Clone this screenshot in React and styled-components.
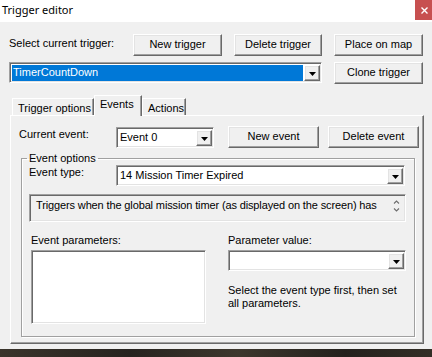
import React from 'react'
import styled, { createGlobalStyle } from 'styled-components';

const GlobalStyle = createGlobalStyle`
  html, body { margin: 0; padding: 0; background: #2b2823; }
  body { font-family: "Liberation Sans", Arial, sans-serif; font-size: 11px; color: #000; }
  * { box-sizing: border-box; }
`

const Arrow = () => (
  <svg width="7" height="4" viewBox="0 0 7 4">
    <path d="M0 0h7L3.5 4z" fill="#000" />
  </svg>
)

const Combo = ({ value, selected }) => (
  <ComboBox>
    <ComboValue $selected={selected}>{value}</ComboValue>
    <DropBtn><Arrow /></DropBtn>
  </ComboBox>
)

const App = () => {
  return (
    <Window>
      <GlobalStyle />
      <TitleBar>
        <Title>Trigger editor</Title>
        <CloseBtn>
          <svg width="7" height="7" viewBox="0 0 7 7">
            <path d="M0.5 0.5l6 6M6.5 0.5l-6 6" stroke="#fff" strokeWidth="1.4" />
          </svg>
        </CloseBtn>
      </TitleBar>
      <Body>
        <TopGrid>
          <TopLabel>Select current trigger:</TopLabel>
          <Button>New trigger</Button>
          <Button>Delete trigger</Button>
          <Button>Place on map</Button>
          <TopCombo>
            <Combo value="TimerCountDown" selected />
          </TopCombo>
          <Button>Clone trigger</Button>
        </TopGrid>

        <TabStrip>
          <Tab $width={82}>Trigger options</Tab>
          <Tab $width={48} $active>Events</Tab>
          <Tab $width={44}>Actions</Tab>
        </TabStrip>

        <TabPanel>
          <EventRow>
            <FieldLabel>Current event:</FieldLabel>
            <Combo value="Event 0" />
            <Button $gap={14}>New event</Button>
            <Button $gap={5}>Delete event</Button>
          </EventRow>

          <Group>
            <Legend>Event options</Legend>
            <TypeRow>
              <FieldLabel>Event type:</FieldLabel>
              <Combo value="14 Mission Timer Expired" />
            </TypeRow>
            <Description>
              <DescText>Triggers when the global mission timer (as displayed on the screen) has</DescText>
              <svg width="7" height="14" viewBox="0 0 7 14">
                <path d="M1 4.5l2.5-2.5 2.5 2.5M1 9.5l2.5 2.5 2.5-2.5" stroke="#6d6d6d" strokeWidth="1.1" fill="none" />
              </svg>
            </Description>
            <ParamGrid>
              <ParamCol $indent>
                <FieldLabel>Event parameters:</FieldLabel>
                <ListBox />
              </ParamCol>
              <ParamCol>
                <FieldLabel>Parameter value:</FieldLabel>
                <Combo value="" />
                <Help>Select the event type first, then set all parameters.</Help>
              </ParamCol>
            </ParamGrid>
          </Group>
        </TabPanel>
      </Body>
      <Desktop />
    </Window>
  )
}

export default App;

const Window = styled.div`
  width: 432px;
  height: 357px;
  display: flex;
  flex-direction: column;
  overflow: hidden;
  background: #f0f0f0;
`
const TitleBar = styled.div`
  height: 22px;
  flex: none;
  background: #fff;
  display: flex;
  justify-content: space-between;
  align-items: flex-start;
`
const Title = styled.div`
  font-family: "Noto Sans", "Open Sans", sans-serif;
  font-size: 11px;
  line-height: 20px;
  padding-left: 2px;
  color: #000;
`
const CloseBtn = styled.div`
  width: 17px;
  height: 20px;
  background: #c75050;
  display: flex;
  align-items: center;
  justify-content: center;
  padding-left: 1px;
`
const Body = styled.div`
  flex: 1;
  padding: 12px 8px 0 9px;
  background: #f0f0f0;
`
const TopGrid = styled.div`
  display: grid;
  grid-template-columns: 112px 89px 88px 89px;
  grid-template-rows: 22px 22px;
  column-gap: 12px;
  row-gap: 6px;
`
const TopLabel = styled.div`
  padding-top: 3px;
  line-height: 13px;
`
const TopCombo = styled.div`
  grid-column: 1 / 4;
  display: flex;
`
const raised = `
  border: 1px solid;
  border-color: #fff #696969 #696969 #fff;
  box-shadow: inset -1px -1px #a0a0a0, inset 1px 1px #e3e3e3;
`
const sunken = `
  border: 1px solid;
  border-color: #a0a0a0 #fff #fff #a0a0a0;
  box-shadow: inset 1px 1px #696969, inset -1px -1px #e3e3e3;
`
const Button = styled.div`
  ${raised}
  height: 22px;
  width: 91px;
  margin-left: ${p => p.$gap || 0}px;
  display: flex;
  align-items: center;
  justify-content: center;
  background: #f0f0f0;
  line-height: 13px;
  padding-bottom: 1px;
  ${TopGrid} & { width: auto; }
`
const ComboBox = styled.div`
  ${sunken}
  flex: 1;
  height: 21px;
  display: flex;
  align-items: stretch;
  background: #fff;
  padding: 2px 1px 1px 2px;
`
const ComboValue = styled.div`
  flex: 1;
  margin-right: 1px;
  background: ${p => (p.$selected ? '#0078d7' : 'transparent')};
  color: ${p => (p.$selected ? '#fff' : '#000')};
  line-height: 15px;
  padding-left: 1px;
  white-space: nowrap;
  overflow: hidden;
`
const DropBtn = styled.div`
  ${raised}
  width: 16px;
  display: flex;
  align-items: center;
  justify-content: center;
  background: #f0f0f0;
  padding-top: 1px;
`
const TabStrip = styled.div`
  margin-top: 11px;
  height: 20px;
  padding-left: 3px;
  display: flex;
  align-items: flex-end;
  position: relative;
  z-index: 1;
`
const Tab = styled.div`
  width: ${p => p.$width}px;
  height: ${p => (p.$active ? 21 : 17)}px;
  margin-bottom: ${p => (p.$active ? -1 : 0)}px;
  padding-top: ${p => (p.$active ? 2 : 3)}px;
  padding-left: 5px;
  line-height: 13px;
  background: #f0f0f0;
  border: 1px solid;
  border-bottom: none;
  border-color: #fff #696969 transparent #fff;
  box-shadow: inset -1px 0 #a0a0a0;
  white-space: nowrap;
`
const TabPanel = styled.div`
  margin-left: 1px;
  width: 414px;
  height: 229px;
  border: 1px solid;
  border-color: #fff #696969 #696969 #fff;
  box-shadow: inset -1px -1px #a0a0a0;
  padding: 10px 0 0 8px;
`
const EventRow = styled.div`
  display: grid;
  grid-template-columns: 97px 98px auto auto;
  height: 22px;
  align-items: start;
  & > div:nth-child(2) { height: 21px; margin-top: 1px; }
`
const FieldLabel = styled.div`
  line-height: 13px;
  padding-top: 2px;
`
const Group = styled.fieldset`
  margin: 4px 0 0 2px;
  width: 394px;
  border: 1px solid #a0a0a0;
  box-shadow: inset 1px 1px #fff, 1px 1px #fff;
  padding: 0 7px 12px 7px;
`
const Legend = styled.legend`
  padding: 0 2px;
  margin-left: -2px;
  line-height: 13px;
`
const TypeRow = styled.div`
  display: grid;
  grid-template-columns: 87px 289px;
  align-items: start;
  & > div:first-child { padding-top: 1px; }
`
const Description = styled.div`
  ${sunken}
  margin-top: 8px;
  width: 377px;
  height: 28px;
  display: flex;
  justify-content: space-between;
  padding: 4px 5px 0 6px;
  line-height: 13px;
  white-space: nowrap;
`
const DescText = styled.span`
  letter-spacing: -0.13px;
`
const ParamGrid = styled.div`
  margin-top: 10px;
  display: grid;
  grid-template-columns: 199px 178px;
`
const ParamCol = styled.div`
  padding-left: ${p => (p.$indent ? 2 : 0)}px;
  display: flex;
  flex-direction: column;
  width: ${p => (p.$indent ? 177 : 178)}px;
  & > div:nth-child(2) { flex: none; margin-top: 3px; }
`
const ListBox = styled.div`
  ${sunken}
  height: 74px;
  background: #fff;
`
const Help = styled.div`
  margin-top: 13px;
  line-height: 13px;
`
const Desktop = styled.div`
  height: 8px;
  flex: none;
  background: linear-gradient(90deg, #3a342b, #26231f 30%, #3d372d 55%, #24211d 80%, #332e26);
`
